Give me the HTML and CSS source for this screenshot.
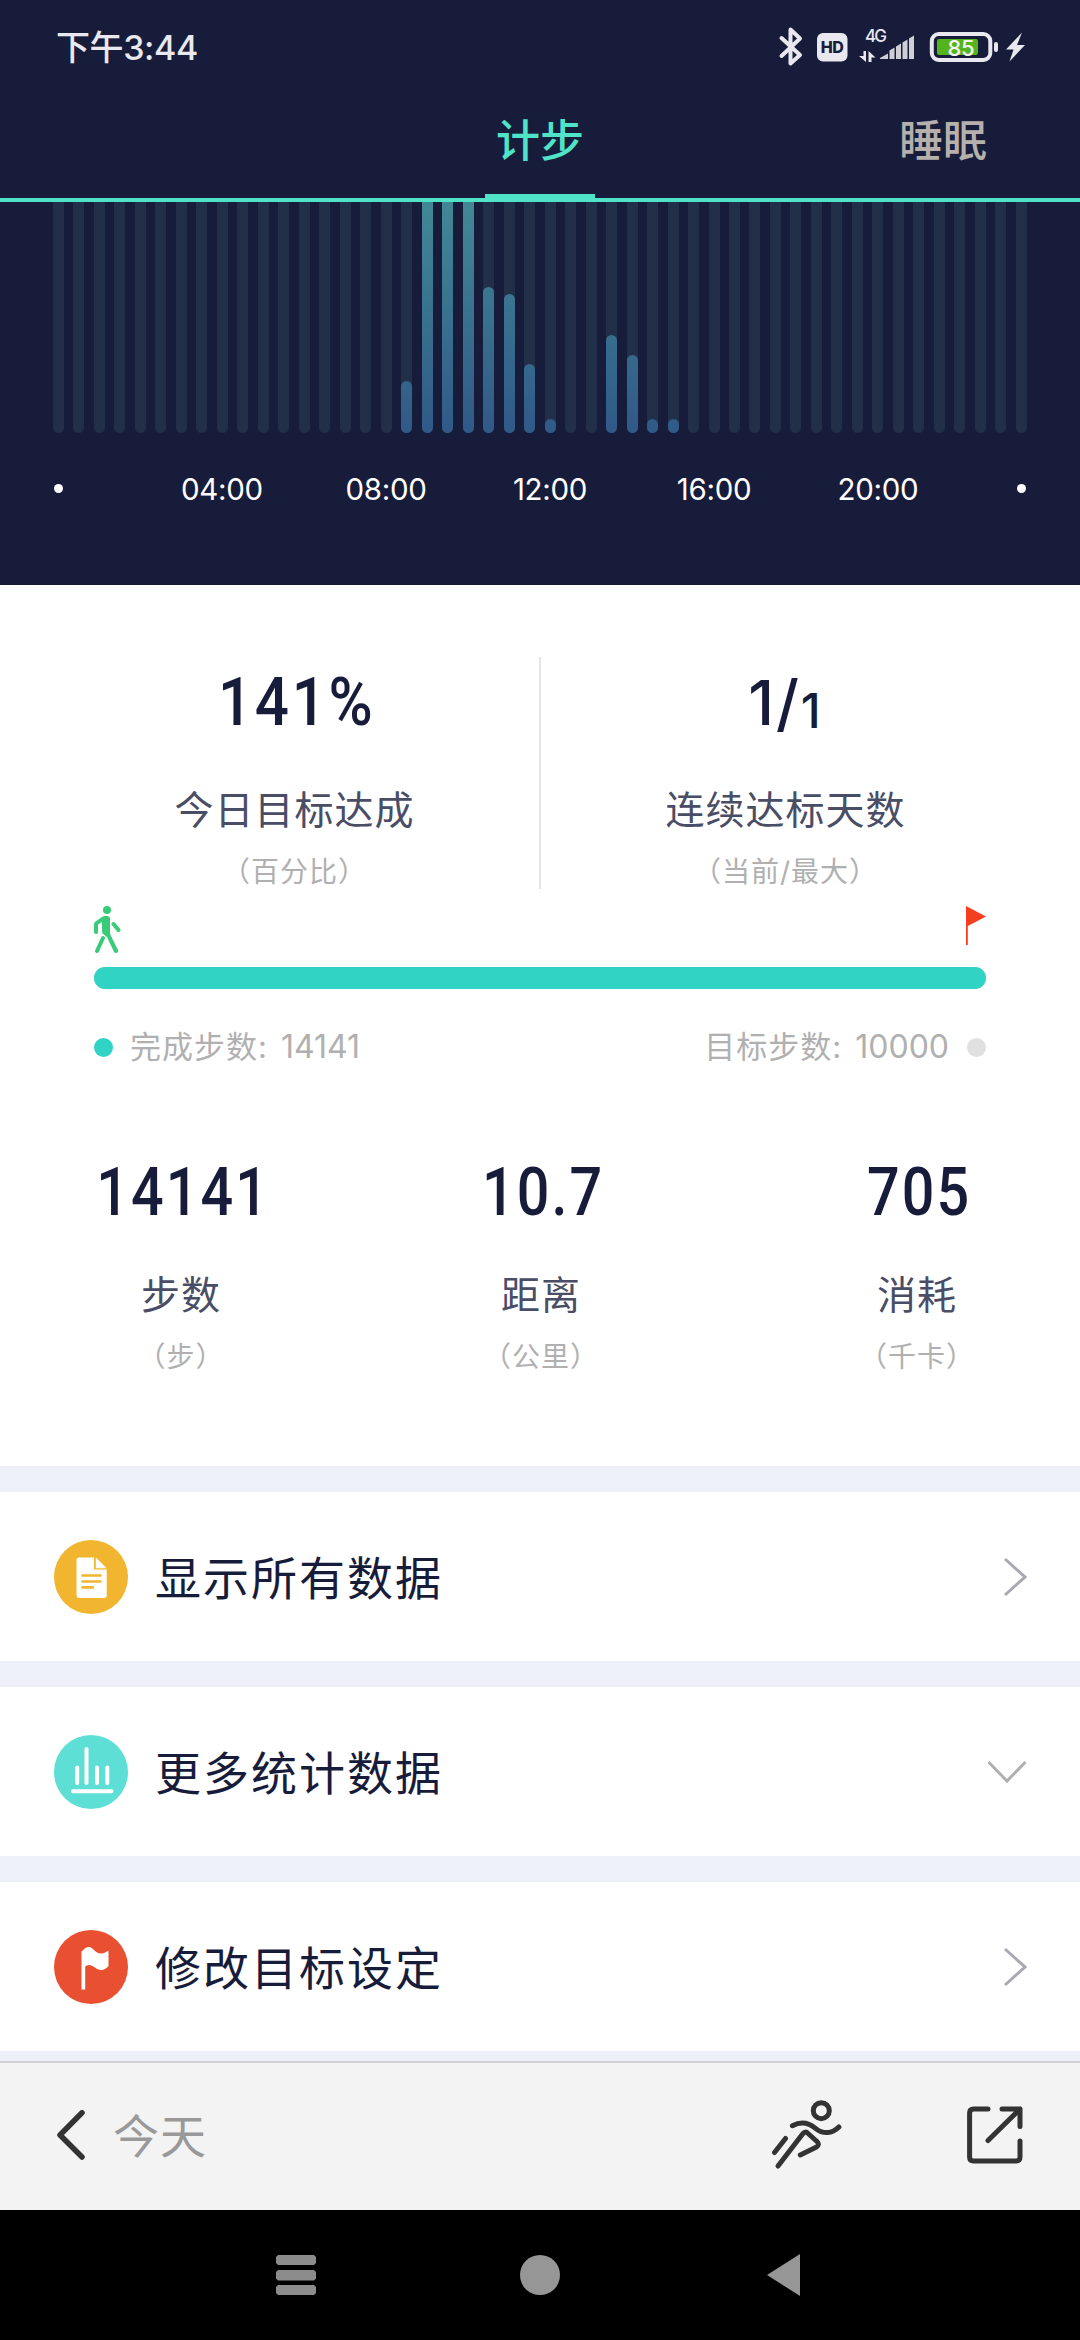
FILE: index.html
```html
<!DOCTYPE html>
<html lang="zh-CN">
<head>
  <meta charset="UTF-8" />
  <meta name="viewport" content="width=device-width, initial-scale=1.0" />
  <title>计步</title>
  <link rel="stylesheet" href="styles.css">
</head>
<body>
  <div class="screen">
    <!-- Status bar -->
    <div class="status-bar">
      <span class="time">下午3:44</span>
      <svg class="status-icons" width="248" height="44" viewBox="778 25 248 44">
        <path d="M781.5 38 L800 55 L790.5 63.5 V29.5 L800 38.5 L781.5 56" fill="none" stroke="#e8e8ee" stroke-width="4" stroke-linecap="round" stroke-linejoin="round" />
        <rect x="817" y="33" width="30.500" height="28.500" rx="6" fill="#e8e8ee" />
        <text x="832.300" y="53" font-size="16" font-weight="800" text-anchor="middle" textLength="23" fill="#181c3b">HD</text>
        <text x="865" y="42" font-size="17" font-weight="500" textLength="22" fill="#e8e8ee">4G</text>
        <path d="M866 51 V62 L859 56 H863.500 V51 Z M868.500 62 V51 L875.500 57.500 H871.500 V62 Z" fill="#e8e8ee" />
        <path d="M880 59 V58 L888 53.500 V59 Z M889.500 59 V50.500 L894.500 47.500 V59 Z M896 59 V46.500 L901 43.500 V59 Z M902.500 59 V42.500 L907.500 39.500 V59 Z M909 59 V38.500 L914 35.500 V59 Z" fill="#cfcfd8" />
        <rect x="931.800" y="34" width="58.500" height="26" rx="7" fill="none" stroke="#e8e8ee" stroke-width="4" />
        <rect x="937" y="39" width="41" height="16" rx="2" fill="#54b41c" />
        <text x="961" y="55.500" font-size="22" font-weight="500" text-anchor="middle" textLength="27" fill="#f4f4f4">85</text>
        <rect x="994" y="42" width="4" height="10" rx="2" fill="#e8e8ee" />
        <path d="M1022 32.500 L1006 49.500 H1013.500 L1009.500 61.500 L1025 45 H1017 Z" fill="#e8e8ee" />
      </svg>
    </div>

    <!-- Tabs -->
    <div class="tabs">
      <span></span>
      <span class="tab active">计步</span>
      <span class="tab">睡眠</span>
    </div>

    <!-- Steps per half hour -->
    <div class="chart">
      <div class="bars" id="bars"></div>
      <div class="axis">
        <i class="axis-dot"></i>
        <span>04:00</span>
        <span>08:00</span>
        <span>12:00</span>
        <span>16:00</span>
        <span>20:00</span>
        <i class="axis-dot last"></i>
      </div>
    </div>

    <!-- Goal summary -->
    <div class="summary">
      <div class="goals">
        <div class="stat">
          <div class="number percent">141%</div>
          <div class="label">今日目标达成</div>
          <div class="unit">（百分比）</div>
        </div>
        <div class="stat">
          <div class="number days">1/<small>1</small></div>
          <div class="label">连续达标天数</div>
          <div class="unit">（当前/最大）</div>
        </div>
      </div>

      <div class="progress">
        <div class="markers">
          <svg width="27" height="48" viewBox="0 0 27 48">
            <circle cx="13" cy="4" r="4" fill="#3acb78" />
            <path d="M8 11 Q9.500 10 11 10 H13 Q16 10 16 13 V26 Q16 28 17 30 L24 44 Q24.500 47 22 47 Q20.500 47 20 46 L13 31 L9 28 Q8 27 8 25 V16 L4 18.500 V26.500 Q4 28 2 28 Q0 28 0 26 V18 Q0 16.500 1.500 15.500 Z" fill="#3acb78" />
            <path d="M9 32 L3 45 M19.500 18 L24.500 24" fill="none" stroke="#3acb78" stroke-width="4" stroke-linecap="round" />
          </svg>
          <svg width="20" height="40" viewBox="0 0 20 40">
            <path d="M0 0 L20 10.500 L1.800 20 V39 H0 Z" fill="#f43e1e" />
          </svg>
        </div>
        <div class="track"><div class="fill"></div></div>
        <div class="legend">
          <span class="legend-item"><i class="dot"></i>完成步数: <b>14141</b></span>
          <span class="legend-item">目标步数: <b>10000</b><i class="dot gray"></i></span>
        </div>
      </div>

      <div class="totals">
        <div class="stat">
          <div class="number">14141</div>
          <div class="label">步数</div>
          <div class="unit">（步）</div>
        </div>
        <div class="stat">
          <div class="number">10.7</div>
          <div class="label">距离</div>
          <div class="unit">（公里）</div>
        </div>
        <div class="stat">
          <div class="number">705</div>
          <div class="label">消耗</div>
          <div class="unit">（千卡）</div>
        </div>
      </div>
    </div>

    <!-- Menu -->
    <div class="menu">
      <div class="menu-item">
        <svg width="74" height="74" viewBox="0 0 74 74">
          <circle cx="37" cy="37" r="37" fill="#f1b52f" />
          <path d="M25 17.500 H40 V29.500 H52.700 V55.500 Q52.700 58 50 58 H25.500 Q22.500 58 22.500 55 V20 Q22.500 17.500 25 17.500 Z M41.800 17.500 L52.700 28.300 H41.800 Z" fill="#fff" />
          <path d="M28.500 35.500 H46.500 M28.500 41.500 H46.500 M28.500 47.400 H39" stroke="#f1b52f" stroke-width="2.600" stroke-linecap="round" />
        </svg>
        <span class="menu-text">显示所有数据</span>
        <svg class="arrow" width="24" height="40" viewBox="0 0 24 40">
          <path d="M2 2 L22 20 L2 38" fill="none" stroke="#a9a9b4" stroke-width="3" />
        </svg>
      </div>
      <div class="menu-item">
        <svg width="74" height="74" viewBox="0 0 74 74">
          <circle cx="37" cy="37" r="37" fill="#5ddfd6" />
          <path d="M23.200 32.500 V48 M32.500 14 V48 M43 32.500 V48 M53.300 32.500 V48 M19 56.200 H57.500" stroke="#fff" stroke-width="4" stroke-linecap="round" />
        </svg>
        <span class="menu-text">更多统计数据</span>
        <svg class="arrow" width="40" height="24" viewBox="0 0 40 24">
          <path d="M1.500 2 L20 21 L38.500 2" fill="none" stroke="#b0b0b0" stroke-width="3" />
        </svg>
      </div>
      <div class="menu-item">
        <svg width="74" height="74" viewBox="0 0 74 74">
          <circle cx="37" cy="37" r="37" fill="#e85031" />
          <path d="M27.500 22 Q27.500 20.500 29 20.500 Q31 17 35 17 C39 17 41 23.500 47 23.500 C50.500 23.500 52 21.500 54.500 20.500 V36 Q51 40 47.500 40 C42 40 39.500 35 35 35 Q32.500 35 31.200 36.500 V59.500 H27.500 Z" fill="#fff" />
        </svg>
        <span class="menu-text">修改目标设定</span>
        <svg class="arrow" width="24" height="40" viewBox="0 0 24 40">
          <path d="M2 2 L22 20 L2 38" fill="none" stroke="#a9a9b4" stroke-width="3" />
        </svg>
      </div>
    </div>

    <!-- Bottom toolbar -->
    <div class="toolbar">
      <svg width="28" height="50" viewBox="0 0 28 50">
        <path d="M25 2.800 L3 25 L25 47" fill="none" stroke="#333" stroke-width="5.500" stroke-linecap="round" stroke-linejoin="round" />
      </svg>
      <span class="today">今天</span>
      <svg class="run" width="70" height="70" viewBox="0 0 70 70">
        <g fill="none" stroke="#333" stroke-width="5" stroke-linecap="round" stroke-linejoin="round">
          <circle cx="49.300" cy="10.700" r="8" />
          <path d="M20.400 25.700 C29 21 36 22 43.500 28.300 C51 34.500 60 34 66.900 27" />
          <path d="M6 66 L31 33.500 Q33 31 35.500 33 L45 41.500 Q48 44.500 44.500 47 L28.300 55" />
          <path d="M2.500 52.500 L13.500 38.500" />
        </g>
      </svg>
      <svg width="56" height="58" viewBox="0 0 56 58">
        <path d="M21 3 H6.500 Q2.600 3 2.600 7 V51 Q2.600 55 6.500 55 H49 Q53 55 53 51 V35 M35 3 H53 V20.500 M53 3 L21 34.500" fill="none" stroke="#333" stroke-width="5" stroke-linecap="round" stroke-linejoin="round" />
      </svg>
    </div>

    <!-- System navigation -->
    <div class="nav-bar">
      <svg width="40" height="42" viewBox="0 0 40 42">
        <path d="M2 1 H38 L40 3 V9 L38 11 H2 L0 9 V3 Z M2 16 H38 L40 18 V24.500 L38 26.500 H2 L0 24.500 V18 Z M2 31 H38 L40 33 V39 L38 41 H2 L0 39 V33 Z" fill="#8c8c8c" />
      </svg>
      <svg class="home" width="40" height="42" viewBox="0 0 40 42">
        <circle cx="20" cy="21" r="20" fill="#969696" />
      </svg>
      <svg width="33" height="42" viewBox="0 0 33 42">
        <path d="M33 0 V42 L0 21 Z" fill="#969696" />
      </svg>
    </div>
  </div>

  <script>
    // slot index -> bar height in px
    const steps = { 17: 52, 18: 240, 19: 240, 20: 240, 21: 146, 22: 139, 23: 69, 24: 14, 27: 98, 28: 78, 29: 14, 30: 14 };
    const bars = document.getElementById("bars");

    for (let i = 0; i < 48; i++) {
      const slot = document.createElement("div");
      slot.className = "slot";
      if (steps[i]) {
        slot.innerHTML = `<div class="bar" style="height: ${steps[i]}px"></div>`;
      }
      bars.appendChild(slot);
    }
  </script>
</body>
</html>
```

FILE: styles.css
```css
* {
  box-sizing: border-box;
}
body {
  margin: 0;
  font-family: Inter, "Noto Sans CJK SC", sans-serif;
  color: #181c3b;
  background: #ffffff;
}
svg {
  display: block;
  flex-shrink: 0;
}
.screen {
  display: flex;
  flex-direction: column;
  width: 1080px;
  height: 2340px;
  overflow: hidden;
}
.status-bar {
  display: flex;
  justify-content: space-between;
  align-items: center;
  height: 94px;
  padding: 0 54px 0 56px;
  background: #181c3b;
}
.time {
  padding-top: 2px;
  font-size: 34px;
  font-weight: 500;
  line-height: 50px;
  letter-spacing: -0.4px;
  color: #e8e8ee;
}
.tabs {
  display: grid;
  grid-template-columns: 1fr 110px 1fr;
  height: 108px;
  border-bottom: 4px solid #50e3c8;
  background: #181c3b;
}
.tab {
  padding-top: 15px;
  font-size: 44px;
  font-weight: 500;
  line-height: 64px;
  text-align: center;
  color: #b5b0ab;
}
.tab:last-child {
  justify-self: end;
  padding-right: 93px;
}
.tab.active {
  color: #50e3c8;
  border-bottom: 4px solid #50e3c8;
}
.chart {
  height: 383px;
  background: #181c3b;
}
.bars {
  display: flex;
  justify-content: space-between;
  height: 231px;
  padding: 0 53px;
  overflow: hidden;
}
.slot {
  display: flex;
  align-items: flex-end;
  width: 11px;
  border-radius: 0 0 6px 6px;
  background: #212f48;
}
.bar {
  flex-shrink: 0;
  width: 11px;
  border-radius: 6px;
  background: linear-gradient(to top, #305988, #428a96) bottom / 11px 240px no-repeat;
}
.axis {
  display: grid;
  grid-template-columns: 86px repeat(5, 164px) 66px;
  align-items: center;
  height: 40px;
  margin-top: 35px;
  padding-left: 54px;
  font-size: 29.5px;
  line-height: 38px;
  letter-spacing: -0.3px;
  text-align: center;
  color: #ffffff;
}
.axis span {
  padding-top: 1px;
}
.axis-dot {
  width: 9px;
  height: 9px;
  border-radius: 50%;
  background: #ffffff;
}
.axis-dot.last {
  justify-self: end;
}
.summary {
  height: 881px;
  padding-top: 72px;
}
.goals {
  display: grid;
  grid-template-columns: 491px 489px;
  grid-template-rows: 232px;
  height: 232px;
  padding: 0 50px;
}
.goals .stat:first-child {
  border-right: 2px solid #e5e5e5;
}
.stat {
  text-align: center;
}
.number {
  height: 91px;
  padding: 1px 0 0 5px;
  font-family: Roboto, sans-serif;
  font-size: 66px;
  font-weight: 500;
  line-height: 90px;
  letter-spacing: 2.4px;
  transform: scaleX(0.87);
}
.number.percent {
  letter-spacing: 3px;
  transform: scaleX(0.91);
}
.number.days {
  padding-left: 0;
  font-family: Inter, sans-serif;
  font-size: 62px;
  letter-spacing: 2px;
  transform: none;
}
.number small {
  font-size: 48px;
  position: relative;
  top: 3px;
}
.label {
  margin-top: 32px;
  font-size: 39px;
  line-height: 60px;
  letter-spacing: 1px;
  color: #4a4d66;
}
.unit {
  font-size: 28px;
  line-height: 40px;
  margin-top: 12px;
  letter-spacing: 1px;
  color: #b0b0b0;
}
.progress {
  padding: 17px 94px 0;
}
.markers {
  display: flex;
  justify-content: space-between;
  height: 61px;
}
.track {
  height: 22px;
  border-radius: 11px;
  background: #e0e0e0;
}
.fill {
  height: 22px;
  border-radius: 11px;
  background: #31d3c5;
}
.legend {
  display: flex;
  justify-content: space-between;
  height: 44px;
  margin-top: 36px;
}
.legend-item {
  display: flex;
  align-items: center;
  font-size: 31px;
  line-height: 44px;
  letter-spacing: 1px;
  color: #b0b0b0;
}
.legend-item b {
  font-weight: 400;
  font-size: 32px;
  letter-spacing: 0;
  margin-left: 13px;
}
.dot {
  width: 19px;
  height: 19px;
  margin-right: 17px;
  border-radius: 50%;
  background: #31d3c5;
}
.dot.gray {
  margin: 0 0 0 18px;
  background: #e0e0e0;
}
.totals {
  display: grid;
  grid-template-columns: 294px 426px 326px;
  margin-top: 78px;
  padding-left: 34px;
}
.totals .label {
  margin-top: 27px;
}
.menu {
  height: 595px;
  padding-top: 26px;
  background: #edf0f9;
}
.menu-item {
  display: flex;
  align-items: center;
  height: 169px;
  margin-bottom: 26px;
  padding: 0 53px 0 54px;
  background: #ffffff;
}
.menu-text {
  margin-left: 27px;
  padding-top: 3px;
  font-size: 46px;
  line-height: 70px;
  letter-spacing: 2px;
}
.arrow {
  margin-left: auto;
}
.toolbar {
  display: flex;
  align-items: center;
  height: 149px;
  padding: 0 57px 3px;
  border-top: 2px solid #d2d2d6;
  background: #f3f3f3;
}
.today {
  margin-left: 28px;
  padding-top: 2px;
  font-size: 46px;
  line-height: 70px;
  letter-spacing: 1px;
  color: #999999;
}
.run {
  margin-left: auto;
  margin-right: 125px;
}
.nav-bar {
  display: flex;
  justify-content: space-between;
  align-items: center;
  height: 130px;
  padding: 0 280px 0 276px;
  background: #000000;
}
.home {
  margin-right: 3px;
}
```
